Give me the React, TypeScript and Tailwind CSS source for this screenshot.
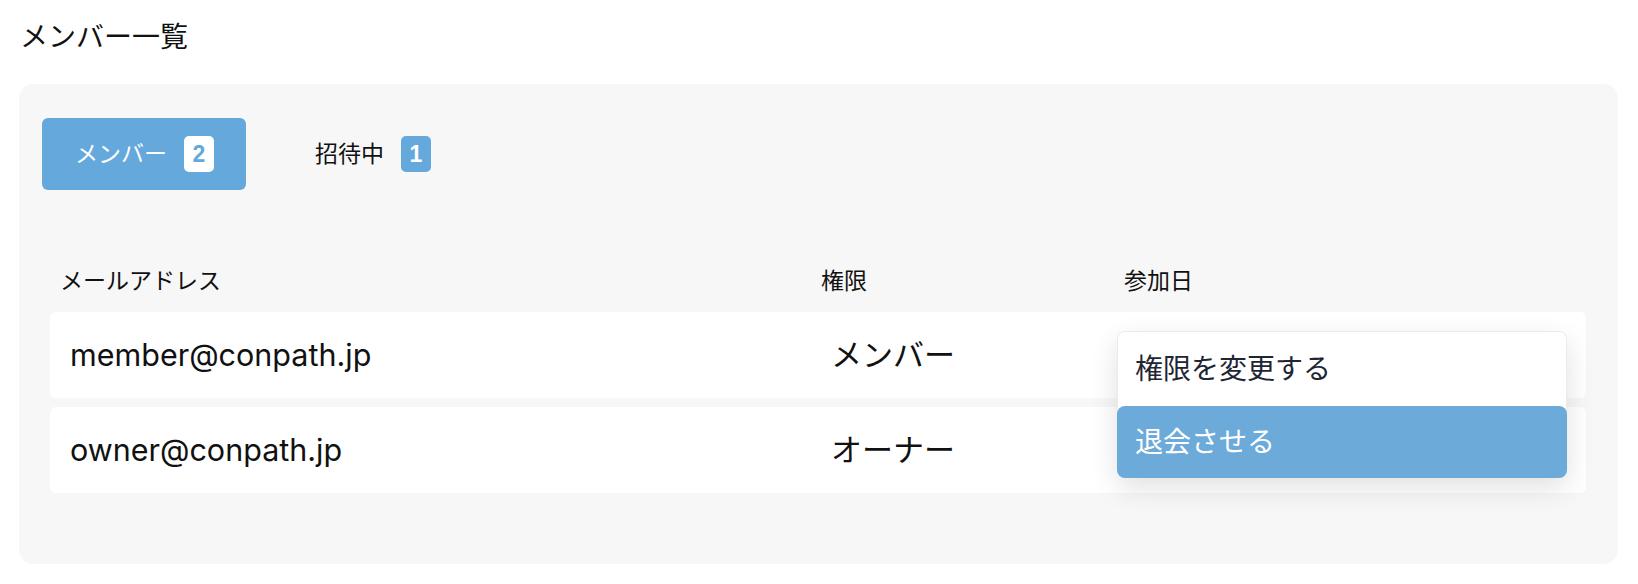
const jp = "font-['Inter','Noto_Sans_CJK_JP',sans-serif]";

const members = [
  { email: "member@conpath.jp", role: "メンバー", menu: true },
  { email: "owner@conpath.jp", role: "オーナー", menu: false },
];

function Badge({ n, active }: { n: number; active: boolean }) {
  return (
    <span
      className={`flex h-[36px] w-[30px] items-center justify-center rounded-[5px] text-[23px] font-semibold font-['Liberation_Sans',sans-serif] ${
        active ? "bg-white text-[#65a9dc]" : "bg-[#65a9dc] text-white"
      }`}
    >
      {n}
    </span>
  );
}

function RowMenu() {
  return (
    <div className="absolute left-[7px] top-[19px] z-10 w-[450px] rounded-[8px] border border-[#ebebeb] bg-white shadow-[0_10px_28px_rgba(0,0,0,0.12)]">
      <div className="flex h-[74px] items-center pl-[17px] text-[28px] text-[#1e2533]">
        権限を変更する
      </div>
      <div className="-mx-px -mb-px flex h-[72px] items-center rounded-[8px] bg-[#6caad9] pl-[18px] text-[28px] text-white">
        退会させる
      </div>
    </div>
  );
}

export default function App() {
  return (
    <div className={`h-[584px] w-[1638px] bg-white text-[#111] ${jp}`}>
      <h1 className="pl-[20px] pt-[19px] text-[28px] leading-[36px] font-normal">
        メンバー一覧
      </h1>

      <div className="ml-[19px] mr-[20px] mt-[29px] h-[480px] rounded-[14px] bg-[#f7f7f7] px-[23px] pt-[34px]">
        {/* Tabs */}
        <div className="flex items-center gap-[36px]">
          <button className="flex h-[72px] w-[204px] items-center gap-[17px] rounded-[6px] bg-[#65a9dc] pl-[33px] text-[23px] text-white">
            メンバー
            <Badge n={2} active />
          </button>
          <button className="flex h-[72px] items-center gap-[17px] pl-[33px] text-[23px] text-[#111]">
            招待中
            <Badge n={1} active={false} />
          </button>
        </div>

        {/* Table */}
        <div className="ml-[8px] mr-[9px] mt-[76px]">
          <div className="grid h-[30px] grid-cols-[760px_300px_1fr] items-center text-[23px] leading-[30px]">
            <div className="pl-[10px]">メールアドレス</div>
            <div className="pl-[11px]">権限</div>
            <div className="pl-[14px]">参加日</div>
          </div>

          <div className="mt-[16px] flex flex-col gap-[9px]">
            {members.map((m) => (
              <div
                key={m.email}
                className="grid h-[86px] grid-cols-[760px_300px_1fr] items-center rounded-[6px] bg-white"
              >
                <div className="pl-[20px] text-[30.5px]">{m.email}</div>
                <div className="pl-[21px] text-[31px]">{m.role}</div>
                <div className="relative h-full">{m.menu && <RowMenu />}</div>
              </div>
            ))}
          </div>
        </div>
      </div>
    </div>
  );
}
